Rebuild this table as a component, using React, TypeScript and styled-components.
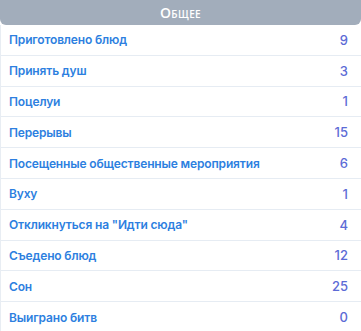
import React from "react";
import styled, { createGlobalStyle } from "styled-components";

const Global = createGlobalStyle`
  html, body { margin: 0; padding: 0; background: #ffffff; }
  body { font-family: Inter, "Noto Sans", sans-serif; }
`;

const Panel = styled.div`
  width: 361px;
  display: flex;
  flex-direction: column;
  margin-top: -6px;
`;

const Header = styled.div`
  height: 31px;
  box-sizing: border-box;
  padding-top: 6px;
  background: #a2adbb;
  border-radius: 6px;
  display: flex;
  align-items: center;
  justify-content: center;
  color: #ffffff;
  font-family: "Open Sans", sans-serif;
  font-size: 14px;
  font-weight: 600;
  font-variant: small-caps;
  letter-spacing: 0.4px;
`;

const List = styled.div`
  display: flex;
  flex-direction: column;
  border-left: 1px solid #e8edf3;
`;

const Row = styled.div`
  display: flex;
  align-items: center;
  justify-content: space-between;
  height: 29.8px;
  padding: 0 13px 0 8px;
  border-bottom: 1px solid #e6ecf3;
  font-size: 12px;
  font-weight: 600;
  letter-spacing: -0.15px;
`;

const Label = styled.span`
  color: #2d7fe0;
`;

const Value = styled.span`
  color: #5c6bd6;
  font-size: 13px;
  font-weight: 500;
  letter-spacing: 0;
`;

const rows: [string, number][] = [
  ["Приготовлено блюд", 9],
  ["Принять душ", 3],
  ["Поцелуи", 1],
  ["Перерывы", 15],
  ["Посещенные общественные мероприятия", 6],
  ["Вуху", 1],
  ['Откликнуться на "Идти сюда"', 4],
  ["Съедено блюд", 12],
  ["Сон", 25],
  ["Выиграно битв", 0],
];

export default function App() {
  return (
    <>
      <Global />
      <Panel>
        <Header>Общее</Header>
        <List>
          {rows.map(([l, v]) => (
            <Row key={l}>
              <Label>{l}</Label>
              <Value>{v}</Value>
            </Row>
          ))}
        </List>
      </Panel>
    </>
  );
}
